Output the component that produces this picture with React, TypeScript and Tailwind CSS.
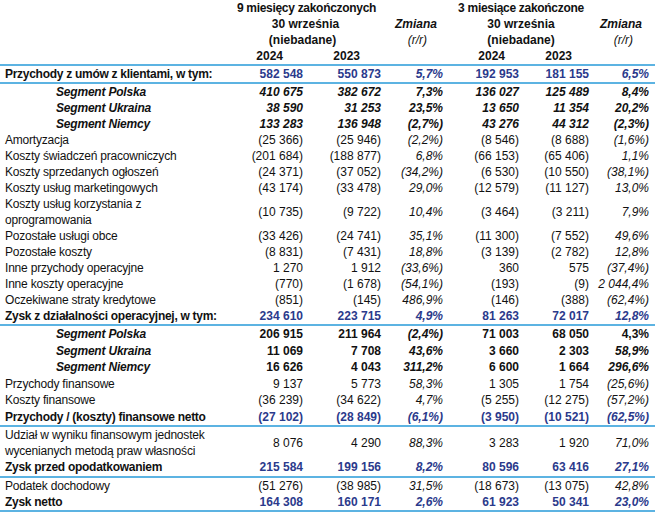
import React from "react";

type Kind = "normal" | "blue" | "seg1" | "seg2";
type Row = { label: string[]; vals: string[]; kind: Kind; h?: string; line?: boolean; upright?: number[] };

const rows: Row[] = [
  { label: ["Przychody z umów z klientami, w tym:"], vals: ["582 548", "550 873", "5,7%", "192 953", "181 155", "6,5%"], kind: "blue", line: true },
  { label: ["Segment Polska"], vals: ["410 675", "382 672", "7,3%", "136 027", "125 489", "8,4%"], kind: "seg1" },
  { label: ["Segment Ukraina"], vals: ["38 590", "31 253", "23,5%", "13 650", "11 354", "20,2%"], kind: "seg1" },
  { label: ["Segment Niemcy"], vals: ["133 283", "136 948", "(2,7%)", "43 276", "44 312", "(2,3%)"], kind: "seg1" },
  { label: ["Amortyzacja"], vals: ["(25 366)", "(25 946)", "(2,2%)", "(8 546)", "(8 688)", "(1,6%)"], kind: "normal" },
  { label: ["Koszty świadczeń pracowniczych"], vals: ["(201 684)", "(188 877)", "6,8%", "(66 153)", "(65 406)", "1,1%"], kind: "normal" },
  { label: ["Koszty sprzedanych ogłoszeń"], vals: ["(24 371)", "(37 052)", "(34,2%)", "(6 530)", "(10 550)", "(38,1%)"], kind: "normal" },
  { label: ["Koszty usług marketingowych"], vals: ["(43 174)", "(33 478)", "29,0%", "(12 579)", "(11 127)", "13,0%"], kind: "normal" },
  { label: ["Koszty usług korzystania z", "oprogramowania"], vals: ["(10 735)", "(9 722)", "10,4%", "(3 464)", "(3 211)", "7,9%"], kind: "normal", h: "h-[32px]" },
  { label: ["Pozostałe usługi obce"], vals: ["(33 426)", "(24 741)", "35,1%", "(11 300)", "(7 552)", "49,6%"], kind: "normal" },
  { label: ["Pozostałe koszty"], vals: ["(8 831)", "(7 431)", "18,8%", "(3 139)", "(2 782)", "12,8%"], kind: "normal" },
  { label: ["Inne przychody operacyjne"], vals: ["1 270", "1 912", "(33,6%)", "360", "575", "(37,4%)"], kind: "normal" },
  { label: ["Inne koszty operacyjne"], vals: ["(770)", "(1 678)", "(54,1%)", "(193)", "(9)", "2 044,4%"], kind: "normal" },
  { label: ["Oczekiwane straty kredytowe"], vals: ["(851)", "(145)", "486,9%", "(146)", "(388)", "(62,4%)"], kind: "normal" },
  { label: ["Zysk z działalności operacyjnej, w tym:"], vals: ["234 610", "223 715", "4,9%", "81 263", "72 017", "12,8%"], kind: "blue", line: true },
  { label: ["Segment Polska"], vals: ["206 915", "211 964", "(2,4%)", "71 003", "68 050", "4,3%"], kind: "seg2", h: "h-[16.5px]", upright: [5] },
  { label: ["Segment Ukraina"], vals: ["11 069", "7 708", "43,6%", "3 660", "2 303", "58,9%"], kind: "seg2", h: "h-[16.5px]" },
  { label: ["Segment Niemcy"], vals: ["16 626", "4 043", "311,2%", "6 600", "1 664", "296,6%"], kind: "seg2", h: "h-[16.5px]" },
  { label: ["Przychody finansowe"], vals: ["9 137", "5 773", "58,3%", "1 305", "1 754", "(25,6%)"], kind: "normal", h: "h-[16.5px]" },
  { label: ["Koszty finansowe"], vals: ["(36 239)", "(34 622)", "4,7%", "(5 255)", "(12 275)", "(57,2%)"], kind: "normal", h: "h-[16.5px]" },
  { label: ["Przychody / (koszty) finansowe netto"], vals: ["(27 102)", "(28 849)", "(6,1%)", "(3 950)", "(10 521)", "(62,5%)"], kind: "blue", line: true, h: "h-[16.5px]" },
  { label: ["Udział w wyniku finansowym jednostek", "wycenianych metodą praw własności"], vals: ["8 076", "4 290", "88,3%", "3 283", "1 920", "71,0%"], kind: "normal", h: "h-[32.4px]" },
  { label: ["Zysk przed opodatkowaniem"], vals: ["215 584", "199 156", "8,2%", "80 596", "63 416", "27,1%"], kind: "blue", line: true, h: "h-[16.2px]" },
  { label: ["Podatek dochodowy"], vals: ["(51 276)", "(38 985)", "31,5%", "(18 673)", "(13 075)", "42,8%"], kind: "normal", h: "h-[16.2px]" },
  { label: ["Zysk netto"], vals: ["164 308", "160 171", "2,6%", "61 923", "50 341", "23,0%"], kind: "blue", line: true, h: "h-[16.2px]" },
];

const grid = "grid grid-cols-[230px_73px_78px_62px_76px_70px_60px]";

function Line() {
  return <div className="h-[2px] w-full bg-[#5cb3e2]" />;
}

function valueClass(kind: Kind, i: number, upright?: number[]) {
  const pct = i === 2 || i === 5;
  if (kind === "normal") return pct ? "italic" : "";
  if (kind === "blue") return "font-bold text-[#2b3a8c]" + (pct ? " italic" : "");
  if (kind === "seg1") return "font-bold italic";
  const up = upright && upright.includes(i);
  return "font-bold" + (pct && !up ? " italic" : "");
}

function labelClass(kind: Kind) {
  if (kind === "normal") return "pl-[5px] tracking-[-0.2px]";
  if (kind === "blue") return "pl-[5px] font-bold tracking-[-0.28px]";
  return "pl-[56px] font-bold italic tracking-[-0.2px]";
}

export default function App() {
  return (
    <div
      className="w-[655px] h-[512px] bg-white text-[#111] text-[12px] leading-[16px] overflow-hidden"
      style={{ fontFamily: '"Liberation Sans", Arial, sans-serif' }}
    >
      {/* header */}
      <div className={grid + " font-bold"}>
        <div className="row-span-4" />
        <div className="col-span-2 h-[16px] text-center tracking-[-0.3px] pl-[2px]">9 miesięcy zakończonych</div>
        <div />
        <div className="col-span-2 h-[16px] text-center pl-[10px] tracking-[-0.3px]">3 miesiące zakończone</div>
        <div />

        <div className="col-span-2 h-[16px] text-center">30 września</div>
        <div className="h-[16px] pr-[6px] text-right italic">Zmiana</div>
        <div className="col-span-2 h-[16px] text-center pl-[10px]">30 września</div>
        <div className="h-[16px] pr-[7px] text-right italic">Zmiana</div>

        <div className="col-span-2 h-[16px] text-center pr-[6px]">(niebadane)</div>
        <div className="h-[16px] pr-[16px] text-right italic font-normal">(r/r)</div>
        <div className="col-span-2 h-[16px] text-center pl-[10px]">(niebadane)</div>
        <div className="h-[16px] pr-[16px] text-right italic font-normal">(r/r)</div>

        <div className="h-[16px] text-right pr-[20px]">2024</div>
        <div className="h-[16px] text-right pr-[21px]">2023</div>
        <div />
        <div className="h-[16px] text-right pr-[14px]">2024</div>
        <div className="h-[16px] text-right pr-[17px]">2023</div>
        <div />
      </div>
      <Line />
      {rows.map((r, idx) => (
        <React.Fragment key={idx}>
          <div className={grid + " items-center " + (r.h ?? "h-[16px]")}>
            <div className={labelClass(r.kind) + " whitespace-nowrap"}>
              {r.label.map((l, j) => (
                <div key={j}>{l}</div>
              ))}
            </div>
            {r.vals.map((v, i) => (
              <div key={i} className={"text-right whitespace-nowrap " + valueClass(r.kind, i, r.upright)}>
                {v}
              </div>
            ))}
          </div>
          {r.line && <Line />}
        </React.Fragment>
      ))}
    </div>
  );
}
